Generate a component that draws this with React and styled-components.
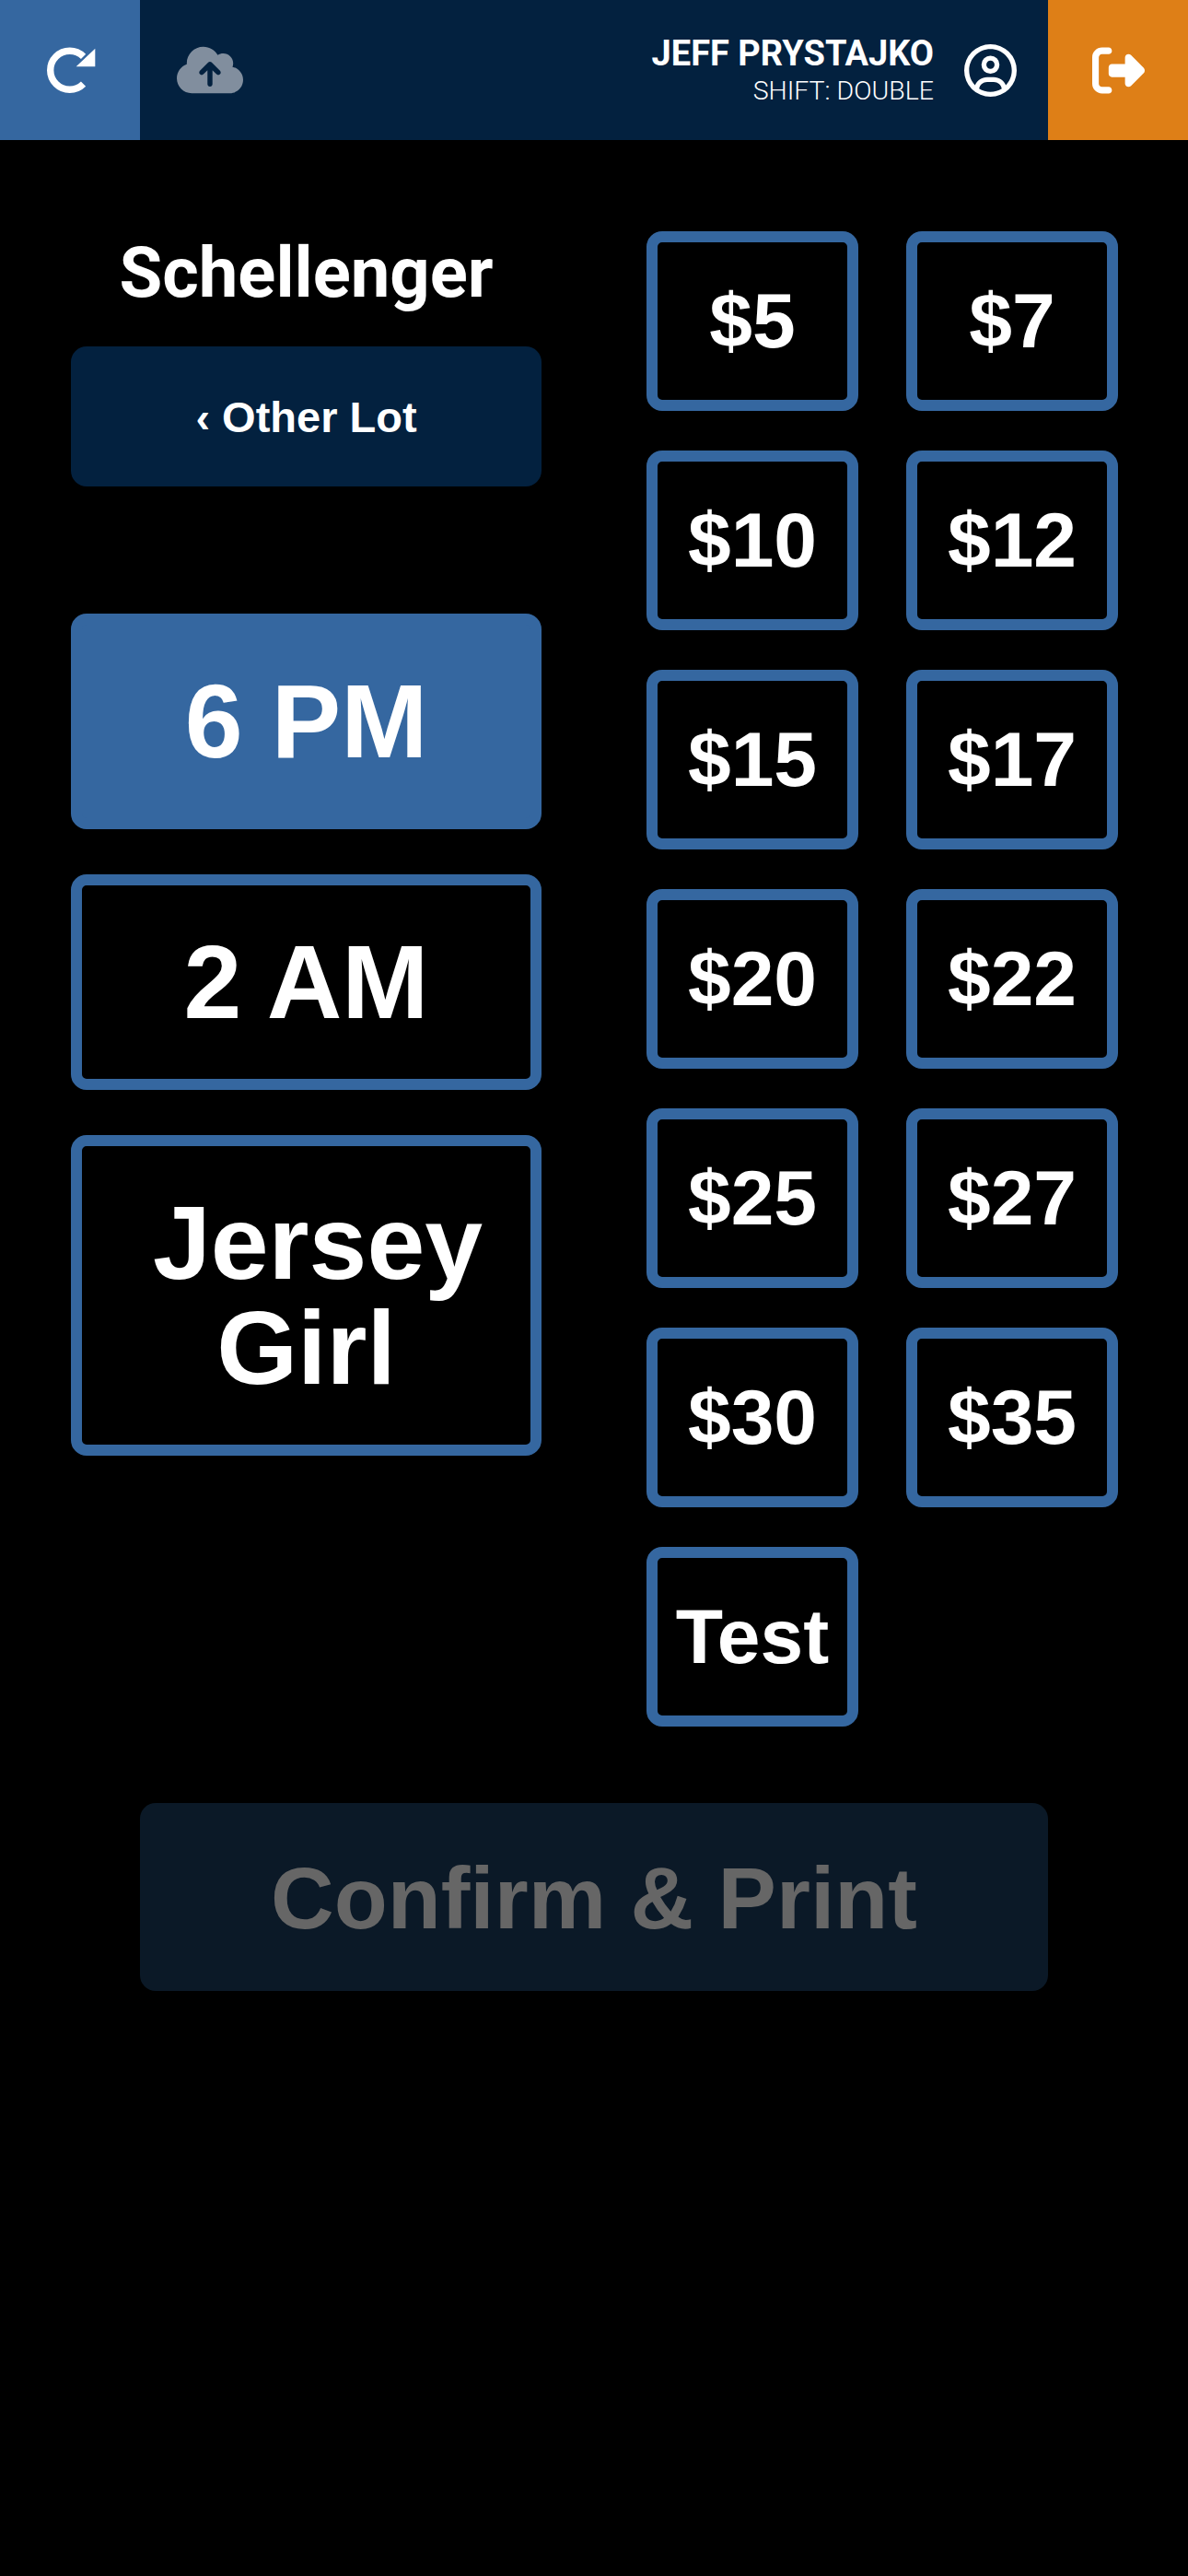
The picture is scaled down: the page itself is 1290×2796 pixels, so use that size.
import React from "react";
import styled, { createGlobalStyle } from "styled-components";
import { FaCloudArrowUp, FaRegCircleUser, FaRightFromBracket } from "react-icons/fa6";

const BLUE = "#3567a0";
const NAVY = "#03213f";
const ORANGE = "#de7f17";

const AMOUNTS = ["$5", "$7", "$10", "$12", "$15", "$17", "$20", "$22", "$25", "$27", "$30", "$35", "Test"];

const GlobalStyle = createGlobalStyle`
  html, body {
    margin: 0;
    padding: 0;
    background: #000;
    font-family: "Liberation Sans", Arial, sans-serif;
    color: #fff;
  }
  * {
    box-sizing: border-box;
  }
  button {
    font-family: "Liberation Sans", Arial, sans-serif;
    color: #fff;
    cursor: pointer;
    padding: 0;
  }
`;

const Page = styled.div`
  min-height: 2796px;
  background: #000;
`;

const Header = styled.header`
  display: flex;
  align-items: center;
  height: 152px;
  background: ${NAVY};
`;

const SquareButton = styled.button`
  display: flex;
  align-items: center;
  justify-content: center;
  flex: none;
  width: 152px;
  height: 152px;
  border: none;
  background: ${(p) => p.$bg};
  font-size: 57px;
`;

const UploadIcon = styled.div`
  display: flex;
  margin-left: 40px;
  font-size: 72px;
  color: #818e9e;
`;

const User = styled.div`
  display: flex;
  align-items: center;
  gap: 33px;
  margin-left: auto;
  padding-right: 34px;
  font-size: 57px;
`;

const UserText = styled.div`
  display: flex;
  flex-direction: column;
  align-items: flex-end;
  font-family: Roboto, sans-serif;
`;

const UserName = styled.div`
  font-size: 38px;
  font-weight: 700;
  line-height: 46px;
`;

const Shift = styled.div`
  font-size: 28.5px;
  font-weight: 300;
  line-height: 36px;
`;

const Main = styled.main`
  display: flex;
  justify-content: space-between;
  padding: 99px 76px 0 77px;
`;

const LeftColumn = styled.div`
  display: flex;
  flex-direction: column;
  width: 511px;
`;

const Title = styled.h1`
  margin: 0 0 35px;
  height: 90px;
  font-family: Roboto, sans-serif;
  font-size: 76px;
  font-weight: 700;
  line-height: 90px;
  text-align: center;
`;

const LotButton = styled.button`
  height: 152px;
  margin-bottom: 138px;
  border: none;
  border-radius: 17px;
  background: ${NAVY};
  font-size: 47px;
  font-weight: 700;
`;

const TimeList = styled.div`
  display: flex;
  flex-direction: column;
  gap: 49px;
`;

const TimeButton = styled.button`
  padding: 48px;
  border: 12px solid ${BLUE};
  border-radius: 17px;
  background: ${(p) => (p.$active ? BLUE : "#000")};
  font-size: 113px;
  font-weight: 700;
  line-height: 114px;
  text-indent: ${(p) => p.$indent || 0}px;
`;

const AmountGrid = styled.div`
  display: grid;
  grid-template-columns: repeat(2, 230px);
  grid-auto-rows: 195px;
  gap: 43px 52px;
`;

const AmountButton = styled.button`
  border: 12px solid ${BLUE};
  border-radius: 17px;
  background: #000;
  font-size: 84px;
  font-weight: 700;
`;

const ConfirmButton = styled.button`
  display: block;
  width: 986px;
  height: 204px;
  margin: 83px auto 0;
  padding-top: 2px;
  border: none;
  border-radius: 17px;
  background: #0b1927;
  color: #666;
  font-size: 95px;
  font-weight: 700;
`;

// thin ring with a sharp corner arrow, no icon package has this exact one
const RefreshIcon = () => (
  <svg width="56" height="56" viewBox="0 0 56 56" fill="none">
    <path d="M42.55 13.45A21 21 0 1 0 42.55 43.15" stroke="#fff" strokeWidth="7.4" />
    <path d="M34.7 24.3H55.3V4.7Z" fill="#fff" />
  </svg>
);

export default function App() {
  return (
    <Page>
      <GlobalStyle />
      <Header>
        <SquareButton $bg={BLUE}>
          <RefreshIcon />
        </SquareButton>
        <UploadIcon>
          <FaCloudArrowUp />
        </UploadIcon>
        <User>
          <UserText>
            <UserName>JEFF PRYSTAJKO</UserName>
            <Shift>SHIFT: DOUBLE</Shift>
          </UserText>
          <FaRegCircleUser />
        </User>
        <SquareButton $bg={ORANGE}>
          <FaRightFromBracket />
        </SquareButton>
      </Header>
      <Main>
        <LeftColumn>
          <Title>Schellenger</Title>
          <LotButton>‹ Other Lot</LotButton>
          <TimeList>
            <TimeButton $active>6 PM</TimeButton>
            <TimeButton>2 AM</TimeButton>
            <TimeButton $indent={25}>Jersey Girl</TimeButton>
          </TimeList>
        </LeftColumn>
        <AmountGrid>
          {AMOUNTS.map((amount) => (
            <AmountButton key={amount}>{amount}</AmountButton>
          ))}
        </AmountGrid>
      </Main>
      <ConfirmButton disabled>Confirm &amp; Print</ConfirmButton>
    </Page>
  );
}
